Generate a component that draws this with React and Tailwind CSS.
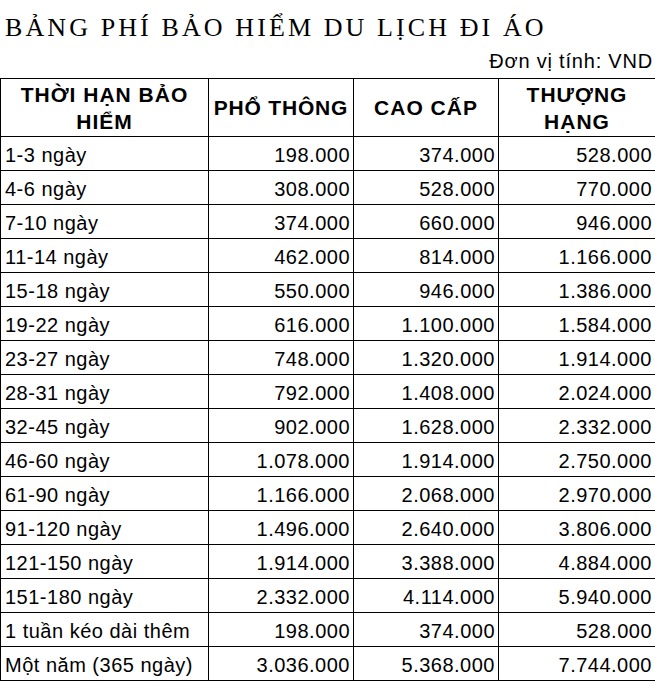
import React from "react";

const rows = [
  ["1-3 ngày", "198.000", "374.000", "528.000"],
  ["4-6 ngày", "308.000", "528.000", "770.000"],
  ["7-10 ngày", "374.000", "660.000", "946.000"],
  ["11-14 ngày", "462.000", "814.000", "1.166.000"],
  ["15-18 ngày", "550.000", "946.000", "1.386.000"],
  ["19-22 ngày", "616.000", "1.100.000", "1.584.000"],
  ["23-27 ngày", "748.000", "1.320.000", "1.914.000"],
  ["28-31 ngày", "792.000", "1.408.000", "2.024.000"],
  ["32-45 ngày", "902.000", "1.628.000", "2.332.000"],
  ["46-60 ngày", "1.078.000", "1.914.000", "2.750.000"],
  ["61-90 ngày", "1.166.000", "2.068.000", "2.970.000"],
  ["91-120 ngày", "1.496.000", "2.640.000", "3.806.000"],
  ["121-150 ngày", "1.914.000", "3.388.000", "4.884.000"],
  ["151-180 ngày", "2.332.000", "4.114.000", "5.940.000"],
  ["1 tuần kéo dài thêm", "198.000", "374.000", "528.000"],
  ["Một năm (365 ngày)", "3.036.000", "5.368.000", "7.744.000"],
];

export default function App() {
  return (
    <div className="w-[655px] h-[682px] bg-white text-black overflow-hidden">
      <div
        className="pl-[5px] pt-[13px] h-[46px] text-[26px] leading-[30px] tracking-[3.1px] whitespace-nowrap"
        style={{ fontFamily: '"Liberation Serif", "DejaVu Serif", serif' }}
      >
        BẢNG PHÍ BẢO HIỂM DU LỊCH ĐI ÁO
      </div>
      <div
        className="h-[32px] text-right pr-[2px] text-[20px] leading-[22px] pt-[4px] tracking-[0.8px] whitespace-nowrap"
        style={{ fontFamily: '"Liberation Sans", Arial, sans-serif' }}
      >
        Đơn vị tính: VND
      </div>
      <table
        className="border-collapse table-fixed w-[655px] text-[20px] tracking-[0.5px]"
        style={{ fontFamily: '"Liberation Sans", Arial, sans-serif' }}
      >
        <colgroup>
          <col className="w-[208px]" />
          <col className="w-[145px]" />
          <col className="w-[145px]" />
          <col className="w-[157px]" />
        </colgroup>
        <thead>
          <tr className="h-[58px]">
            <th className="border border-black font-bold text-center text-[21px] tracking-[1px] leading-[27px] px-[14px] py-0">THỜI HẠN BẢO HIỂM</th>
            <th className="border border-black font-bold text-center text-[21px] tracking-[0.8px] leading-[27px] px-0 py-0 whitespace-nowrap">PHỔ THÔNG</th>
            <th className="border border-black font-bold text-center text-[21px] tracking-[1px] leading-[27px] px-0 py-0">CAO CẤP</th>
            <th className="border border-black font-bold text-center text-[21px] tracking-[1px] leading-[27px] px-[20px] py-0">THƯỢNG HẠNG</th>
          </tr>
        </thead>
        <tbody>
          {rows.map((r, i) => (
            <tr key={i} className="h-[34px]">
              <td className="border border-black pl-[4px] pr-0 pt-[2px] pb-0 leading-[22px] whitespace-nowrap">{r[0]}</td>
              <td className="border border-black pr-[3px] pt-[2px] pb-0 text-right leading-[22px]">{r[1]}</td>
              <td className="border border-black pr-[3px] pt-[2px] pb-0 text-right leading-[22px]">{r[2]}</td>
              <td className="border border-black pr-[3px] pt-[2px] pb-0 text-right leading-[22px]">{r[3]}</td>
            </tr>
          ))}
        </tbody>
      </table>
    </div>
  );
}
